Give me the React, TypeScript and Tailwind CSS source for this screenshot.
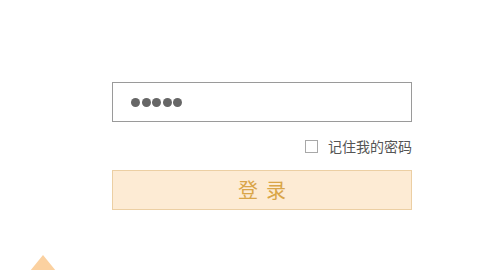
import React from "react";

export default function App() {
  return (
    <div className="relative w-[497px] h-[270px] bg-white overflow-hidden" style={{ fontFamily: '"Noto Sans CJK SC", "Noto Sans", sans-serif' }}>
      <div className="pl-[112px] pt-[82px] w-[412px]">
        <div className="h-[40px] w-[300px] border border-[#9a9a9a] bg-white flex items-center pl-[18px] gap-[1.5px]">
          {[0, 1, 2, 3, 4].map((i) => (
            <span key={i} className="w-[9px] h-[9px] rounded-full bg-[#666666]" />
          ))}
        </div>
        <div className="mt-[17px] h-[14px] flex items-center justify-end w-[300px]">
          <span className="w-[13px] h-[13px] border border-[#a8a8a8] bg-white mr-[10px]" />
          <span className="text-[14px] leading-none text-[#555555] tracking-[0px]">记住我的密码</span>
        </div>
        <button className="mt-[17px] h-[40px] w-[300px] border border-[#eccfa3] bg-[#fdebd4] flex items-center justify-center">
          <span className="text-[20px] leading-none text-[#d9a548] tracking-[8px] pl-[8px]">登录</span>
        </button>
      </div>
      <svg className="absolute left-0 top-0" width="497" height="270" viewBox="0 0 497 270">
        <polygon points="43,255 56,271 30,271" fill="#fbd1a0" />
      </svg>
    </div>
  );
}
